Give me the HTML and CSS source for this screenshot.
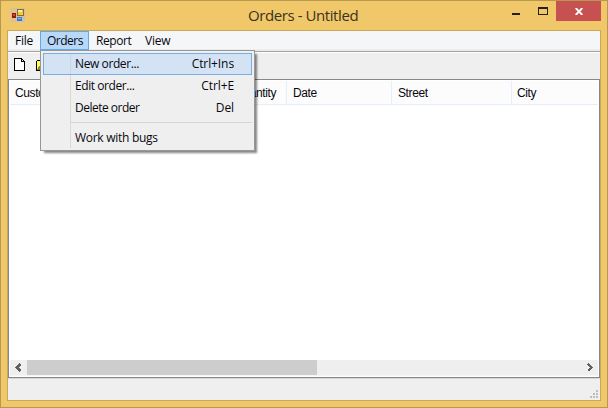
FILE: index.html
```html
<!DOCTYPE html>
<html lang="en">
<head>
<meta charset="utf-8">
<title>Orders - Untitled</title>
<link rel="stylesheet" href="styles.css">
</head>
<body>
<div class="window">
  <header class="titlebar">
    <svg class="app-icon" width="14" height="14" viewBox="0 0 14 14" shape-rendering="crispEdges">
      <path fill="#c9c3ad" d="M0 0h14v14H0z"/><path fill="#e3c47b" d="M1 1h4v3H1zM1 10h4v3H1z"/>
      <path fill="#8f6d20" d="M6 1h7v7H6z"/><path fill="#f8c83c" d="M7 2h5v5H7z"/><path fill="#ffe99a" d="M7 2h4v2H7z"/>
      <path fill="#8e1c12" d="M1 5h4v5H1z"/><path fill="#e2412c" d="M2 6h2v2H2z"/>
      <path fill="#4379d0" d="M6 9h5v4H6z"/><path fill="#8bb8fa" d="M7 10h3v1H7z"/>
    </svg>
    <h1 class="title">Orders - Untitled</h1>
    <div class="controls">
      <span class="minimize"></span><span class="maximize"></span>
      <span class="close"><svg width="8" height="7" viewBox="0 0 8 7"><path d="M.7 0 7.3 7M7.3 0 .7 7" stroke="#fff" stroke-width="1.9"/></svg></span>
    </div>
  </header>
  <main class="client">
    <nav class="menubar"><span class="item file">File</span><span class="item orders">Orders</span><span class="item report">Report</span><span class="item view">View</span></nav>
    <div class="toolbar">
      <svg width="12" height="14" viewBox="0 0 12 14" shape-rendering="crispEdges"><path fill="#fff" d="M1 1h6l4 4v8H1z"/><path d="M0 0h8v1H0zM0 0h1v13H0zM0 12h11v1H0zM10 4h1v9h-1zM7 0h1v4H7zM7 3h4v1H7zM8 1h1v1H8zM9 2h1v1H9z"/></svg>
      <svg class="open" width="15" height="11" viewBox="0 0 15 11" shape-rendering="crispEdges"><path d="M1 0h4v1h7v10H0V1h1z"/><path fill="#ffff54" d="M1 1h3v1h5v3H4v4H1z"/><path fill="#8c8c20" d="M3 6h11l-3 4H1z"/></svg>
    </div>
    <section class="list">
      <div class="columns"><span class="c1">Customer</span><span class="c2">Quantity</span><span class="c3">Date</span><span class="c4">Street</span><span class="c5">City</span></div>
      <div class="rows"></div>
      <div class="scrollbar">
        <svg class="arrow" width="17" height="15" viewBox="0 0 17 15" shape-rendering="crispEdges"><path d="M10.5 4 7 7.5l3.5 3.5" fill="none" stroke="#606060" stroke-width="2.3"/></svg>
        <div class="thumb"></div>
        <svg class="arrow next" width="17" height="15" viewBox="0 0 17 15" shape-rendering="crispEdges"><path d="M7 4l3.500 3.500L7 11" fill="none" stroke="#606060" stroke-width="2.3"/></svg>
      </div>
    </section>
    <footer class="status"><svg width="8" height="8" viewBox="0 0 8 8" fill="#bdbdbd" shape-rendering="crispEdges"><path d="M6 0h2v2H6zM3 3h2v2H3zM6 3h2v2H6zM0 6h2v2H0zM3 6h2v2H3zM6 6h2v2H6z"/></svg></footer>
  </main>
  <div class="dropdown">
    <div class="entry active"><span class="new">New order...</span><span class="ins">Ctrl+Ins</span></div>
    <div class="entry"><span class="edit">Edit order...</span><span class="key-e">Ctrl+E</span></div>
    <div class="entry"><span class="delete">Delete order</span><span>Del</span></div>
    <div class="separator"></div>
    <div class="entry"><span class="work">Work with bugs</span></div>
  </div>
</div>
</body>
</html>
```
FILE: styles.css
```css
* { box-sizing: border-box; }
body { margin: 0; font: 12px/16px "Open Sans", "Noto Sans", sans-serif; color: #08080e; overflow: hidden; }
svg { display: block; flex: none; }
.window { position: relative; width: 608px; height: 408px; background: #f0c869; border: 1px solid #b69850; padding: 0 6px; }
.titlebar { display: flex; height: 29px; align-items: flex-start; }
.app-icon { margin: 7px 0 0 4px; }
.title { flex: 1; margin: 4px 0 0 223px; font-size: 15px; line-height: 21px; font-weight: 400; letter-spacing: -.42px; color: #3a321f; white-space: nowrap; }
.controls { display: flex; height: 20px; }
.minimize { width: 8px; height: 2px; background: #24211a; margin: 12px 18px 0 0; }
.maximize { width: 10px; height: 8px; border: 1px solid #24211a; border-top-width: 2px; margin: 6px 8px 0 0; }
.close { display: flex; width: 45px; height: 20px; background: #c75050; align-items: flex-start; justify-content: center; padding-top: 7px; }
.client { width: 594px; height: 371px; border: 1px solid #c9a858; background: #efefef; }
.menubar { display: flex; height: 21px; background: #f5f6f7; border-bottom: 1px solid #a0a0a0; box-shadow: inset 0 -2px #ececec; }
.item { height: 19px; line-height: 19px; white-space: nowrap; letter-spacing: -.25px; }
.file { width: 32px; padding-left: 7px; }
.orders { width: 49px; padding-left: 6px; line-height: 17px; letter-spacing: -.5px; background: #b8d8f9; border: 1px solid #66a7e8; }
.report { width: 49px; padding-left: 7px; letter-spacing: -.4px; }
.view { padding-left: 7px; }
.toolbar { display: flex; height: 27px; padding: 5px 6px; gap: 10px; border-top: 1px solid #fff; align-items: flex-start; }
.open { margin-top: 2px; }
.list { display: flex; flex-direction: column; height: 299px; border: 1px solid #828790; background: #fff; padding: 1px; }
.columns { display: flex; height: 24px; background: #fcfcfc; border-bottom: 1px solid #e5eefb; font: 12px/24px "Liberation Sans", sans-serif; letter-spacing: -.4px; }
.columns span { border-right: 1px solid #e5eefb; padding-left: 6px; white-space: nowrap; }
.columns .c1 { width: 120px; padding-left: 5px; }
.c2 { width: 157px; text-align: right; padding-right: 10px; }
.c3, .c4 { width: 105px; }
.c4 { width: 120px; }
.columns .c5 { border: 0; padding-left: 5px; }
.rows { flex: 1; }
.scrollbar { display: flex; height: 16px; background: #efefef; border-bottom: 1px solid #f5f5f5; }
.thumb { width: 290px; background: #cdcdcd; }
.next { margin-left: auto; }
.status { display: flex; height: 22px; border-top: 1px solid #d7d7d7; justify-content: flex-end; align-items: flex-end; padding: 0 2px 2px 0; }
.dropdown { position: absolute; left: 39px; top: 49px; width: 215px; height: 101px; padding: 2px; background: linear-gradient(90deg, transparent 29px, #d8d8d8 29px, #d8d8d8 30px, transparent 30px) 0 2px / 100% 95px no-repeat #efefef; border: 1px solid #979797; box-shadow: 3px 3px 2px -1px rgba(0,0,0,.48); }
.entry { display: flex; height: 22px; line-height: 20px; padding: 0 17px 0 31px; border: 1px solid transparent; justify-content: space-between; white-space: nowrap; letter-spacing: -.1px; }
.new { letter-spacing: -.4px; }
.edit { letter-spacing: -.43px; }
.delete { letter-spacing: -.5px; }
.work { letter-spacing: -.28px; }
.active { background: rgba(184,216,249,.5); border-color: #78aee5; }
.separator { height: 1px; margin: 3px 0 4px 28px; background: #d5d5d5; }
```
